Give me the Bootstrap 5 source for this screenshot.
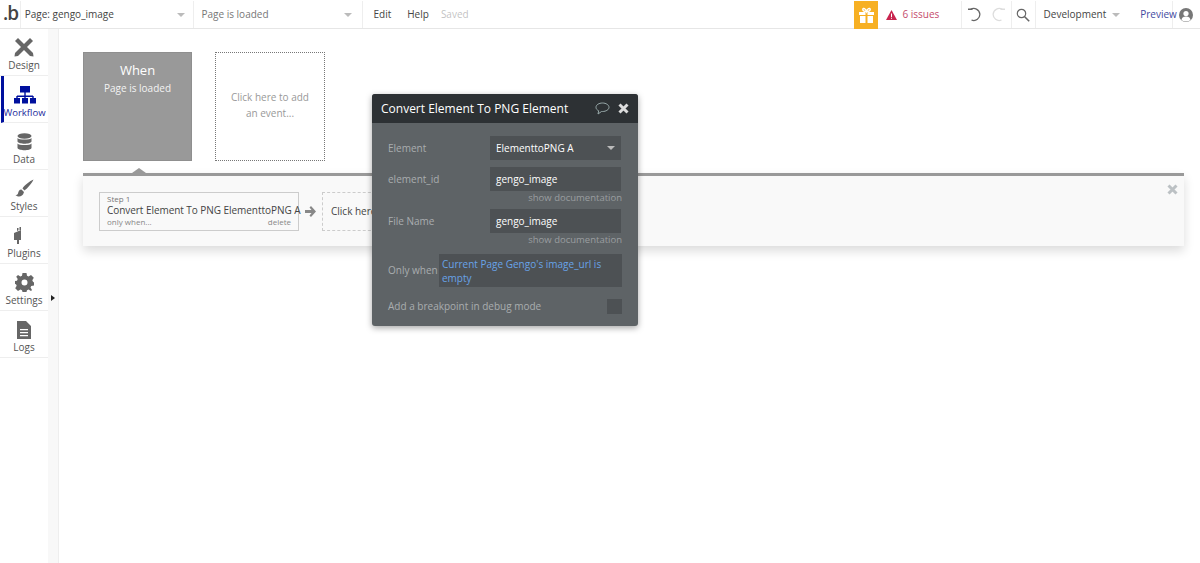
<!DOCTYPE html>
<html lang="en"><head><meta charset="utf-8"><title>Workflow</title>
<link href="https://cdn.jsdelivr.net/npm/bootstrap@5.3.0/dist/css/bootstrap.min.css" rel="stylesheet">
<style>
html,body{height:563px;overflow:hidden;background:#fff}
body{font-family:"Open Sans","Liberation Sans",sans-serif;font-size:10px;color:#444;position:relative}
.topbar{height:29px;border-bottom:1px solid #e6e6e6;background:#fff;padding-top:1px}
.tcell{height:27px;border-right:1px solid #eee;display:flex;align-items:center}
.logo{width:21px;font-size:19px;font-weight:600;color:#444;line-height:1;padding-left:3px;padding-bottom:3px;letter-spacing:-1px}
.pagesel{width:177px;padding:0 8px 0 4px;font-size:10px;color:#444}
.eventsel{width:172px;padding:0 10px 0 7px;font-size:10px;color:#777}
.caret{width:0;height:0;border-left:4px solid transparent;border-right:4px solid transparent;border-top:4px solid #bbb;margin-left:auto}
.menus{width:500px;border-right:0;font-size:10px;padding-left:10px}
.menus b{font-weight:400;color:#444}
.gift{width:25px;height:28px;background:#f7b023;display:flex;align-items:center;justify-content:center}
.issues{width:85px;padding-left:8px;font-size:10px;color:#c54a6c;gap:5px;margin-left:0;justify-content:flex-start}
.undo{width:51px;justify-content:center;gap:9px}
.srch{width:24px;justify-content:center}
.envsel{width:137px;border-right:1px solid #eee;padding-left:8px;gap:6px;color:#444}
.envsel .caret{margin-left:0}
.envsel span.pv{color:#3f4a9f;margin-left:14px}
.usr{width:28px;justify-content:center}
.shell{height:534px}
.side{width:48px;flex:none;background:#fff}
.tool{height:47px;border-bottom:1px solid #eee;display:flex;flex-direction:column;align-items:center;justify-content:flex-end;padding-bottom:3px;color:#555;font-size:10px;line-height:13px;gap:2px}
.tool.on{border-left:3px solid #00109e;color:#1c2a9c;margin-left:1px;padding-right:3px;font-size:9.5px}
.gutter{width:11px;flex:none;background:#f8f8f8;border-right:1px solid #eee;position:relative}
.gutter i{position:absolute;left:3px;top:266px;border-left:4px solid #222;border-top:3.5px solid transparent;border-bottom:3.5px solid transparent}
.canvas{flex:1;padding:23px 16px 0 24px;position:relative}
.evrow{gap:23px;height:109px}
.evwhen{width:109px;height:109px;background:#999;color:#fff;text-align:center;border:1px solid #8f8f8f}
.evwhen h6{font-size:13px;font-weight:400;margin:9px 0 4px;line-height:16px}
.evwhen p{font-size:10px;margin:0;line-height:13px;color:#f3f3f3}
.evadd{width:110px;height:109px;border:1px dotted #777;color:#999;text-align:center;font-size:10px;line-height:16px;display:flex;align-items:center;justify-content:center;padding:0 10px 4px}
.panel{margin-top:12px;height:73px;background:#f9f9f9;border-top:3px solid #999;box-shadow:0 5px 10px rgba(0,0,0,.14);padding:15px 16px;position:relative;gap:6px}
.panel::before{content:"";position:absolute;left:49px;top:-8px;border-left:7px solid transparent;border-right:7px solid transparent;border-bottom:5px solid #999}
.step{width:200px;height:39px;border:1px solid #ccc;background:#f9f9f9;padding:1px 7px 0;line-height:11px}
.step small{display:block;font-size:8px;color:#777;line-height:9px}
.step strong{display:block;font-weight:400;font-size:10px;color:#444;line-height:14px;white-space:nowrap;letter-spacing:-.05px}
.step em{font-style:normal;font-size:8px;color:#888;line-height:10px}
.stepadd{width:110px;height:39px;border:1px dashed #ccc;display:flex;align-items:center;padding-left:8px;font-size:10px;color:#444;white-space:nowrap;overflow:hidden}
.pclose{position:absolute;right:6px;top:8px}
.prop{position:absolute;left:372px;top:94px;width:266px;height:232px;background:#5e6366;border-radius:3px;box-shadow:0 2px 6px rgba(0,0,0,.35);color:#a9adaf;font-size:10px}
.prophead{height:29px;background:#2d3134;border-radius:3px 3px 0 0;color:#fff;padding:0 9px;font-size:12px}
.frow{padding:0 16px}
.flabel{width:102px;flex:none}
.fbox{width:131px;height:24px;background:#4d5154;color:#fff;padding:0 6px;display:flex;align-items:center}
.doc{text-align:right;font-size:9.5px;color:#9a9ea0;padding:0 16px;line-height:12px;margin-top:1px}
.whenbox{width:183px;height:33px;background:#4d5154;color:#68a3e8;padding:3px 3px;line-height:14px;margin-left:-1px}
.chk{width:15px;height:15px;background:#4d5154;margin-left:auto}
</style></head>
<body>
<header class="topbar d-flex">
  <div class="tcell logo">.b</div>
  <div class="tcell pagesel"><span>Page: gengo_image</span><span class="caret"></span></div>
  <div class="tcell eventsel"><span>Page is loaded</span><span class="caret"></span></div>
  <div class="tcell menus gap-3 flex-grow-1"><b>Edit</b><span class="d-flex gap-2"><b>Help</b><span class="text-black-50 opacity-50 ms-1">Saved</span></span></div>
  <div class="gift"><svg width="17" height="17" viewBox="0 0 17 17"><path fill="#fff" d="M1 5h6.5v3H1zM9.500 5H16v3H9.500zM2 9h5.500v7H2zM9.500 9H15v7H9.500z"/><path fill="none" stroke="#fff" stroke-width="1.500" d="M8.500 4.500C6 4.500 4.500 3.500 4.800 2.200 5.200.800 7.500 1.500 8.500 4.500 9.500 1.500 11.800.800 12.200 2.200 12.500 3.500 11 4.500 8.500 4.500z"/></svg></div>
  <div class="tcell issues"><svg width="11" height="10" viewBox="0 0 11 10"><path fill="#c9254f" d="M5.500 0 11 10H0z"/><path fill="#fff" d="M5 3.500h1v3.500H5zM5 7.800h1v1H5z"/></svg><span>6 issues</span></div>
  <div class="tcell undo">
    <svg width="15" height="15" viewBox="0 0 15 15"><path fill="none" stroke="#666" stroke-width="1.300" d="M3.500 2.500A6 6 0 1 1 4.500 13"/><path fill="#666" d="M1 1.500h4.500v1.500H1z"/></svg>
    <svg width="15" height="15" viewBox="0 0 15 15"><path fill="none" stroke="#ddd" stroke-width="1.300" d="M11.500 2.500A6 6 0 1 0 10.500 13"/><path fill="#ddd" d="M9.500 1.500H14v1.500H9.500z"/></svg>
  </div>
  <div class="tcell srch"><svg width="14" height="14" viewBox="0 0 14 14"><circle cx="5.500" cy="5.500" r="4.200" fill="none" stroke="#666" stroke-width="1.200"/><path stroke="#666" stroke-width="1.600" d="M8.700 8.700l4.500 4.500"/></svg></div>
  <div class="tcell envsel"><span>Development</span><span class="caret"></span><span class="pv">Preview</span></div>
  <div class="tcell usr border-0"><svg width="14" height="14" viewBox="0 0 14 14"><circle cx="7" cy="7" r="7" fill="#777"/><circle cx="7" cy="5.500" r="2.600" fill="#fff"/><path fill="#fff" d="M2.500 12c.5-3 2.500-3.500 4.500-3.500s4 .5 4.500 3.500A7 7 0 0 1 7 13.500 7 7 0 0 1 2.500 12z"/></svg></div>
</header>
<div class="shell d-flex">
  <nav class="side">
    <div class="tool"><svg width="20" height="20" viewBox="0 0 20 20"><path fill="#666" d="M1 4l3-3 15 15 .5 3.500-3.500-.5z"/><path fill="#666" d="M19 4l-3-3L1 16l-.5 3.500 3.500-.5z"/></svg><span>Design</span></div>
    <div class="tool on"><svg width="22" height="18" viewBox="0 0 22 18"><path fill="#00109e" d="M6 0h10v6.500H6zM10.300 6.500h1.400V10h-1.400zM3 9.500h16V11H3zM0 12h6v5.500H0zM8 12h6v5.500H8zM16 12h6v5.500h-6z"/><path fill="#00109e" d="M2.300 10h1.400v2H2.300zM10.300 10h1.400v2h-1.400zM18.300 10h1.400v2h-1.400z"/></svg><span>Workflow</span></div>
    <div class="tool"><svg width="15" height="18" viewBox="0 0 15 18"><ellipse cx="7.500" cy="3" rx="7" ry="2.800" fill="#666"/><path fill="#666" d="M.5 5c1 2 13 2 14 0v3.500c-1 3-13 3-14 0zM.5 10.500c1 2 13 2 14 0V15c-1 3-13 3-14 0z"/></svg><span>Data</span></div>
    <div class="tool"><svg width="19" height="19" viewBox="0 0 19 19"><path fill="#666" d="M18.500.500C15 2 9 6.500 7.500 9.500l2 2C12.500 9.500 17 4 18.500.500zM6.500 10.500C4 10.500 3.500 12.500 3 14.500 2.700 15.700 1.500 16 .5 16c1.500 2 7 3 8.500-3z"/></svg><span>Styles</span></div>
    <div class="tool"><svg width="20" height="19" viewBox="0 0 20 19"><path fill="#666" d="M0 7l7-3v10H5v4H3v-4H0zM3 5V2h1.500v2.300zM5.500 4V1H7v3z"/></svg><span class="d-none"></span><span>Plugins</span></div>
    <div class="tool"><svg width="19" height="19" viewBox="0 0 19 19"><path fill="#666" fill-rule="evenodd" d="M7.500 0h4l.5 2.800 1.600.7L16 2l2.800 2.800-1.500 2.400.7 1.600 1 .7v3l-2.800.5-.7 1.600 1.500 2.400L16 18l-2.400-1.500-1.600.7-.5 1.800h-4l-.5-1.800-1.600-.7L3 18 .2 15.200l1.500-2.400L1 11.200 0 11V8l2-.3.700-1.600L1.200 3.700 3 2l2.400 1.500 1.600-.7zM9.500 6.500a3 3 0 1 0 0 6 3 3 0 0 0 0-6z"/></svg><span>Settings</span></div>
    <div class="tool"><svg width="14" height="18" viewBox="0 0 14 18"><path fill="#666" fill-rule="evenodd" d="M0 0h9l5 5v13H0zM3 8v1.200h8V8zM3 11v1.200h8V11zM3 14v1.200h8V14z"/></svg><span>Logs</span></div>
  </nav>
  <div class="gutter"><i></i></div>
  <main class="canvas">
    <div class="evrow d-flex">
      <div class="evwhen"><h6>When</h6><p>Page is loaded</p></div>
      <div class="evadd">Click here to add an event...</div>
    </div>
    <section class="panel d-flex align-items-center">
      <div class="step"><small>Step 1</small><strong>Convert Element To PNG ElementtoPNG A</strong><div class="d-flex justify-content-between"><em>only when...</em><em>delete</em></div></div>
      <svg width="11" height="11" viewBox="0 0 11 11"><path fill="#888" d="M6 0l5 5.500L6 11 4.500 9.500 6.500 7H0V4h6.500L4.500 1.500z"/></svg>
      <div class="stepadd">Click here to add</div>
      <svg class="pclose" width="11" height="11" viewBox="0 0 11 11"><path stroke="#bcc1c4" stroke-width="3" d="M1.500 1.500l8 8M9.500 1.500l-8 8"/></svg>
    </section>
  </main>
</div>
<aside class="prop">
  <div class="prophead d-flex align-items-center"><span>Convert Element To PNG Element</span>
    <svg class="ms-auto me-1" width="15" height="13" viewBox="0 0 15 13"><path fill="none" stroke="#9aa" d="M7.500 1C3.900 1 1 2.900 1 5.300c0 1.500 1 2.700 2.700 3.500L3 12l3.500-2.500h1c3.600 0 6.500-1.900 6.500-4.200S11.100 1 7.500 1z"/></svg>
    <svg class="ms-1" width="11" height="11" viewBox="0 0 11 11"><path stroke="#ddd" stroke-width="3" d="M1.500 1.500l8 8M9.500 1.500l-8 8"/></svg></div>
  <div class="frow d-flex align-items-center mt-2 pt-1 ms-0" style="margin-top:13px!important;padding-top:0!important"><span class="flabel">Element</span><div class="fbox">ElementtoPNG A<span class="caret"></span></div></div>
  <div class="frow d-flex align-items-center" style="margin-top:7px"><span class="flabel">element_id</span><div class="fbox">gengo_image</div></div>
  <div class="doc">show documentation</div>
  <div class="frow d-flex align-items-center" style="margin-top:5px"><span class="flabel">File Name</span><div class="fbox">gengo_image</div></div>
  <div class="doc">show documentation</div>
  <div class="frow d-flex align-items-center" style="margin-top:8px"><span class="text-nowrap" style="width:52px">Only when</span><div class="whenbox">Current Page Gengo's image_url is empty</div></div>
  <div class="frow d-flex align-items-center" style="margin-top:12px"><span>Add a breakpoint in debug mode</span><span class="chk"></span></div>
</aside>
</body></html>
